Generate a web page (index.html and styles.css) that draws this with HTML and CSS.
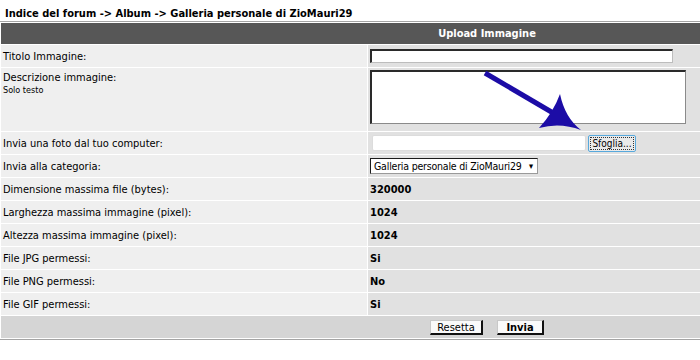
FILE: index.html
```html
<!DOCTYPE html>
<html lang="it">
<head>
    <meta charset="UTF-8">
    <title>Upload Immagine</title>
    <link rel="stylesheet" href="styles.css">
</head>
<body>
    <div class="nav">Indice del forum -&gt; Album -&gt; Galleria personale di ZioMauri29</div>

    <div class="forumline">
        <table class="upload">
            <tr>
                <th colspan="2">Upload Immagine</th>
            </tr>
            <tr>
                <td class="row1">Titolo Immagine:</td>
                <td class="row2"><input type="text" class="post title-input"></td>
            </tr>
            <tr>
                <td class="row1 top">Descrizione immagine:<br><span class="small">Solo testo</span></td>
                <td class="row2 tall"><textarea class="post desc-input"></textarea></td>
            </tr>
            <tr>
                <td class="row1">Invia una foto dal tuo computer:</td>
                <td class="row2">
                    <div class="file-pick">
                        <span class="file-name"></span>
                        <span class="browse"><span class="browse-label">Sfoglia...</span></span>
                    </div>
                </td>
            </tr>
            <tr>
                <td class="row1">Invia alla categoria:</td>
                <td class="row2">
                    <div class="select-box">
                        <span class="select-text">Galleria personale di ZioMauri29</span>
                        <span class="caret">&#9662;</span>
                    </div>
                </td>
            </tr>
            <tr>
                <td class="row1">Dimensione massima file (bytes):</td>
                <td class="row2 value">320000</td>
            </tr>
            <tr>
                <td class="row1">Larghezza massima immagine (pixel):</td>
                <td class="row2 value">1024</td>
            </tr>
            <tr>
                <td class="row1">Altezza massima immagine (pixel):</td>
                <td class="row2 value">1024</td>
            </tr>
            <tr>
                <td class="row1">File JPG permessi:</td>
                <td class="row2 value">Si</td>
            </tr>
            <tr>
                <td class="row1">File PNG permessi:</td>
                <td class="row2 value">No</td>
            </tr>
            <tr>
                <td class="row1">File GIF permessi:</td>
                <td class="row2 value">Si</td>
            </tr>
            <tr>
                <td class="catbottom" colspan="2">
                    <div class="actions">
                        <button class="liteoption">Resetta</button>
                        <button class="mainoption">Invia</button>
                    </div>
                </td>
            </tr>
        </table>
    </div>

    <!-- arrow drawn over the form, pointing at the browse button -->
    <svg class="arrow" width="700" height="360" viewBox="0 0 700 360">
        <line x1="485" y1="73" x2="560" y2="117" stroke="#1c0ca6" stroke-width="5"/>
        <path d="M560 94 Q565 118 581 130 Q560 122 539 128 Q553 113 560 94 Z" fill="#1c0ca6"/>
    </svg>
</body>
</html>
```

FILE: styles.css
```css
html, body {
    margin: 0;
    padding: 0;
    background-color: #fff;
    overflow: hidden;
}

body {
    font-family: 'DejaVu Sans Condensed', 'Liberation Sans', sans-serif;
    font-size: 11px;
    color: #000;
    width: 700px;
    height: 360px;
    position: relative;
}

.nav {
    font-weight: bold;
    padding: 7px 5px 0 5px;
    height: 14px;
    line-height: 13px;
}

/* the table is wider than the window; only its left part shows */
.forumline {
    width: 700px;
    overflow: hidden;
    border-top: 1px solid #a4a4a4;
    border-bottom: 1px solid #a4a4a4;
}

.upload {
    width: 974px;
    border-collapse: separate;
    border-spacing: 1px;
    background-color: #fff;
}

.upload th {
    background-color: #575757;
    color: #fff;
    font-weight: bold;
    height: 21px;
    padding: 0;
    text-align: center;
}

.upload td {
    height: 22px;
    padding: 0 2px;
}

.row1 {
    background-color: #efefef;
    width: 362px;
}

.row2 {
    background-color: #e1e1e1;
}

.top {
    vertical-align: top;
    padding-top: 4px !important;
    line-height: 12px;
}

.tall {
    height: 61px !important;
    vertical-align: top;
    padding-top: 2px !important;
}

.small {
    font-size: 9px;
}

.value {
    font-weight: bold;
}

.post {
    display: block;
    box-sizing: border-box;
    margin: 0;
    background: #fff;
    border-style: solid;
    border-width: 2px 1px 1px 2px;
    border-color: #2a2a2a #bdbdbd #bdbdbd #2a2a2a;
    font-family: inherit;
    font-size: 11px;
}

.title-input {
    width: 303px;
    height: 14px;
    padding: 0;
}

.desc-input {
    width: 316px;
    height: 54px;
    resize: none;
    border-right-color: #8a8a8a;
    border-bottom-color: #8a8a8a;
}

.file-pick {
    display: flex;
    align-items: center;
    gap: 2px;
    padding-left: 2px;
}

.file-name {
    display: block;
    width: 212px;
    height: 14px;
    background: #fff;
    border: 1px solid #dcdcdc;
    border-radius: 2px;
}

.browse {
    display: block;
    width: 44px;
    height: 13px;
    padding: 1px;
    border: 1px solid #58a9dc;
    border-radius: 2px;
    background: #eaeaea;
}

.browse-label {
    display: block;
    height: 11px;
    line-height: 11px;
    text-align: center;
    border: 1px dotted #333;
    font-size: 10px;
}

.select-box {
    display: flex;
    align-items: center;
    justify-content: space-between;
    width: 168px;
    height: 16px;
    box-sizing: border-box;
    padding: 0 4px 0 3px;
    background: #fff;
    border-style: solid;
    border-width: 1px;
    border-color: #1a1a1a #9a9a9a #9a9a9a #1a1a1a;
    white-space: nowrap;
    overflow: hidden;
}

.select-text {
    font-size: 10.5px;
    letter-spacing: -0.2px;
}

.caret {
    font-size: 9px;
}

.catbottom {
    background-color: #d5d5d5;
    text-align: center;
}

.actions {
    display: flex;
    justify-content: center;
    gap: 14px;
}

.liteoption, .mainoption {
    font-family: inherit;
    font-size: 11px;
    background-color: #fafafa;
    color: #000;
    height: 15px;
    padding: 0;
    border-style: solid;
    border-width: 1px 2px 2px 1px;
    border-color: #c8c8c8 #111 #111 #c8c8c8;
}

.liteoption {
    width: 53px;
}

.mainoption {
    width: 47px;
    font-weight: bold;
}

.arrow {
    position: absolute;
    left: 0;
    top: 0;
    pointer-events: none;
}
```
